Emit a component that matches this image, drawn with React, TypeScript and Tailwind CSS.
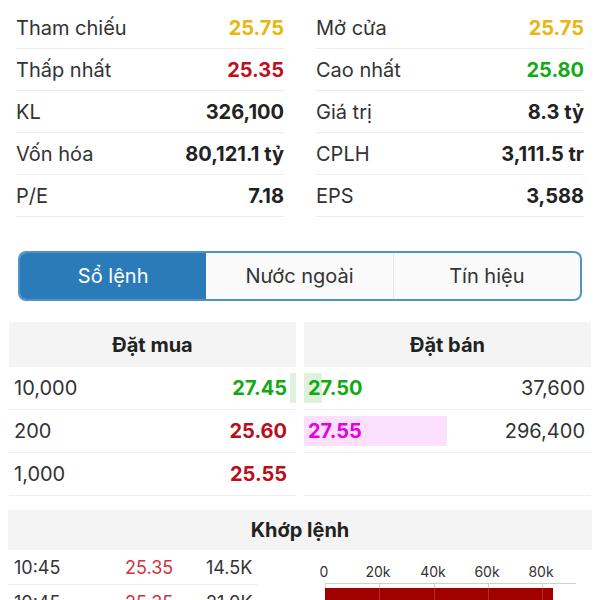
import React from "react";

const font = { fontFamily: "Inter, 'Liberation Sans', sans-serif" };

type Stat = { label: string; value: string; color?: string };

const leftStats: Stat[] = [
  { label: "Tham chiếu", value: "25.75", color: "text-[#e6b710]" },
  { label: "Thấp nhất", value: "25.35", color: "text-[#c0101c]" },
  { label: "KL", value: "326,100" },
  { label: "Vốn hóa", value: "80,121.1 tỷ" },
  { label: "P/E", value: "7.18" },
];

const rightStats: Stat[] = [
  { label: "Mở cửa", value: "25.75", color: "text-[#e6b710]" },
  { label: "Cao nhất", value: "25.80", color: "text-[#16a916]" },
  { label: "Giá trị", value: "8.3 tỷ" },
  { label: "CPLH", value: "3,111.5 tr" },
  { label: "EPS", value: "3,588" },
];

function StatColumn({ items }: { items: Stat[] }) {
  return (
    <div className="flex flex-col">
      {items.map((s) => (
        <div
          key={s.label}
          className="flex h-[42px] items-center justify-between border-b border-[#ebebeb]"
        >
          <span className="text-[20px] text-[#333]">{s.label}</span>
          <span className={"text-[20px] font-bold " + (s.color ?? "text-[#222]")}>
            {s.value}
          </span>
        </div>
      ))}
    </div>
  );
}

const bids = [
  { qty: "10,000", price: "27.45", color: "text-[#15a815]", bar: true },
  { qty: "200", price: "25.60", color: "text-[#b80f1c]", bar: false },
  { qty: "1,000", price: "25.55", color: "text-[#b80f1c]", bar: false },
];

function Chart() {
  const ticks = [25, 79, 134, 188, 242];
  const labels = ["0", "20k", "40k", "60k", "80k"];
  return (
    <svg width="291" height="50" viewBox="0 0 291 50">
      {ticks.map((x, i) => (
        <text
          key={x}
          x={x - 1}
          y="27"
          textAnchor="middle"
          fontSize="14"
          fill="#333"
          fontFamily="Inter, 'Liberation Sans', sans-serif"
        >
          {labels[i]}
        </text>
      ))}
      <line x1="25" y1="33.5" x2="276" y2="33.5" stroke="#cfcfcf" strokeWidth="1" />
      {ticks.map((x) => (
        <line key={"t" + x} x1={x + 0.5} y1="33" x2={x + 0.5} y2="40" stroke="#cfcfcf" strokeWidth="1" />
      ))}
      <rect x="25" y="38" width="228" height="12" fill="#a10000" />
      {ticks.slice(1).map((x) => (
        <line key={"g" + x} x1={x + 0.5} y1="38" x2={x + 0.5} y2="50" stroke="#b52a2a" strokeWidth="1" />
      ))}
    </svg>
  );
}

export default function App() {
  return (
    <div className="h-[600px] w-[600px] overflow-hidden bg-white text-[#333]" style={font}>
      <div className="grid grid-cols-2 gap-x-8 px-4 pt-[7px]">
        <StatColumn items={leftStats} />
        <StatColumn items={rightStats} />
      </div>

      <div className="mx-[18px] mt-[34px] flex h-[50px] overflow-hidden rounded-lg border-2 border-[#4f93c9] bg-[#fafafa]">
        <div className="flex flex-1 items-center justify-center bg-[#2b7bb9] text-[20px] text-white">
          Sổ lệnh
        </div>
        <div className="flex flex-1 items-center justify-center border-r border-[#e6e6e6] text-[20px] text-[#333]">
          Nước ngoài
        </div>
        <div className="flex flex-1 items-center justify-center text-[20px] text-[#333]">
          Tín hiệu
        </div>
      </div>

      <div className="mt-[21px] grid grid-cols-2 gap-x-2 px-[9px]">
        <div className="flex flex-col">
          <div className="flex h-[45px] items-center justify-center bg-[#f4f4f4] text-[20px] font-bold text-[#222]">
            Đặt mua
          </div>
          {bids.map((b) => (
            <div
              key={b.qty}
              className="flex h-[43px] items-center justify-between border-b border-[#efefef] pl-[5px]"
            >
              <span className="text-[20px] text-[#333]">{b.qty}</span>
              <div className="flex h-full items-center">
                <span className={"pr-[3px] text-[20px] font-bold " + b.color}>{b.price}</span>
                <div className={"h-[30px] w-[6px] " + (b.bar ? "bg-[#dff0df]" : "")} />
              </div>
            </div>
          ))}
        </div>
        <div className="flex flex-col">
          <div className="flex h-[45px] items-center justify-center bg-[#f4f4f4] text-[20px] font-bold text-[#222]">
            Đặt bán
          </div>
          <div className="flex h-[43px] items-center justify-between border-b border-[#efefef] pr-[6px]">
            <div className="flex h-[30px] w-[18px] items-center overflow-visible whitespace-nowrap bg-[#dff0df] pl-[4px] text-[20px] font-bold text-[#15a815]">
              27.50
            </div>
            <span className="text-[20px] text-[#333]">37,600</span>
          </div>
          <div className="flex h-[43px] items-center justify-between border-b border-[#efefef] pr-[6px]">
            <div className="flex h-[30px] w-[143px] items-center bg-[#fde0fd] pl-[4px] text-[20px] font-bold text-[#e600e6]">
              27.55
            </div>
            <span className="text-[20px] text-[#333]">296,400</span>
          </div>
          <div className="h-[43px] border-b border-[#efefef]" />
        </div>
      </div>

      <div className="mx-2 mt-[14px] flex h-[40px] items-center justify-center bg-[#f4f4f4] text-[20px] font-bold text-[#222]">
        Khớp lệnh
      </div>

      <div className="flex pl-2">
        <div className="flex w-[250px] flex-col">
          {[0, 1].map((i) => (
            <div
              key={i}
              className="flex h-[35px] items-center border-b border-[#efefef] pl-[6px] text-[18px]"
            >
              <span className="w-[111px] text-[#333]">10:45</span>
              <span className="w-[81px] text-[#d0343f]">25.35</span>
              <span className="text-[#333]">{i === 0 ? "14.5K" : "21.0K"}</span>
            </div>
          ))}
        </div>
        <div className="ml-[42px]">
          <Chart />
        </div>
      </div>
    </div>
  );
}
